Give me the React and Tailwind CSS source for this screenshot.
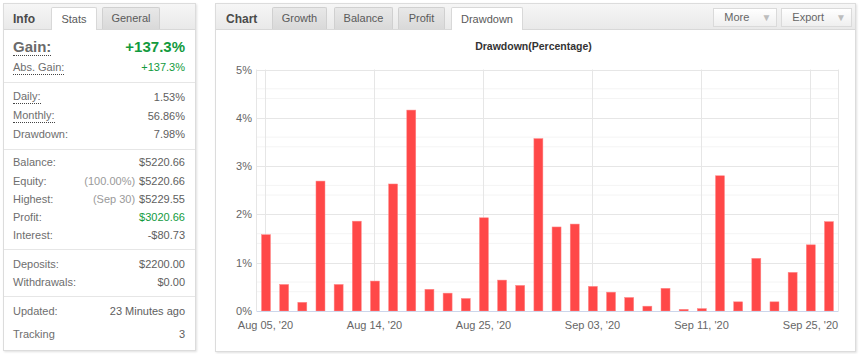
import React from "react";

const font = { fontFamily: '"Liberation Sans", Arial, sans-serif' };

// drawdown values, one bar per trading day
const bars = [
  1.58, 0.55, 0.18, 2.69, 0.55, 1.86, 0.62, 2.63, 4.16, 0.45, 0.37, 0.26,
  1.93, 0.64, 0.53, 3.57, 1.74, 1.8, 0.51, 0.39, 0.28, 0.1, 0.47, 0.035,
  0.05, 2.8, 0.19, 1.09, 0.19, 0.8, 1.37, 1.85,
];

const xLabels = [
  { x: 265.5, t: "Aug 05, '20" },
  { x: 374.5, t: "Aug 14, '20" },
  { x: 483.5, t: "Aug 25, '20" },
  { x: 592.5, t: "Sep 03, '20" },
  { x: 701.5, t: "Sep 11, '20" },
  { x: 810.5, t: "Sep 25, '20" },
];

const Tab = ({ label, active }) => (
  <div
    className={`h-[22px] flex items-center justify-center text-[11px] text-[#5a5a5a] border border-b-0 rounded-t-[2px] ${
      active
        ? "bg-white border-[#d8d8d8] -mb-px h-[23px]"
        : "bg-gradient-to-b from-[#e8e8e8] to-[#d9d9d9] border-[#d0d0d0]"
    }`}
  >
    {label}
  </div>
);

const Row = ({ label, value, note, dotted, green, h = "h-[18px]" }) => (
  <div className={`flex items-center justify-between ${h} text-[11px]`}>
    <span
      className={`text-[#6e6e6e] ${dotted ? "border-b border-dotted border-[#444] leading-[13px]" : ""}`}
    >
      {label}
    </span>
    <span className={green ? "text-[#129a3e]" : "text-[#5e5e5e]"}>
      {note && <span className="text-[#9a9a9a] mr-1">{note}</span>}
      {value}
    </span>
  </div>
);

const StatsPanel = () => (
  <div className="w-[193px] h-[348px] bg-white border border-[#dcdcdc] shadow-[1px_1px_2px_rgba(0,0,0,0.12)] flex flex-col">
    <div className="h-[26px] bg-gradient-to-b from-[#f6f6f6] to-[#e9e9e9] border-b border-[#d8d8d8] flex items-end pl-[9px]">
      <div className="font-bold text-[12px] text-[#4a4a4a] self-center mt-[4px] w-[38px]">Info</div>
      <div className="w-[46px]">
        <Tab label="Stats" active />
      </div>
      <div className="w-[58px] ml-[5px]">
        <Tab label="General" />
      </div>
    </div>

    <div className="px-[9px] pr-[10px] pt-[7px] pb-[5px] border-b border-[#e6e6e6]">
      <div className="flex items-center justify-between h-[21px] font-bold text-[15px]">
        <span className="text-[#6a6a6a] border-b border-dotted border-[#444] leading-[16px]">Gain:</span>
        <span className="text-[#129a3e]">+137.3%</span>
      </div>
      <Row label="Abs. Gain:" value="+137.3%" dotted green h="h-[19px]" />
    </div>

    <div className="px-[9px] pr-[10px] pt-[5px] pb-[5px] border-b border-[#e6e6e6]">
      <Row label="Daily:" value="1.53%" dotted h="h-[18.5px]" />
      <Row label="Monthly:" value="56.86%" dotted h="h-[18.5px]" />
      <Row label="Drawdown:" value="7.98%" h="h-[18.5px]" />
    </div>

    <div className="px-[9px] pr-[10px] pt-[4px] pb-[5px] border-b border-[#e6e6e6]">
      <Row label="Balance:" value="$5220.66" h="h-[18.2px]" />
      <Row label="Equity:" note="(100.00%)" value="$5220.66" h="h-[18.2px]" />
      <Row label="Highest:" note="(Sep 30)" value="$5229.55" h="h-[18.2px]" />
      <Row label="Profit:" value="$3020.66" green h="h-[18.2px]" />
      <Row label="Interest:" value="-$80.73" h="h-[18.2px]" />
    </div>

    <div className="px-[9px] pr-[10px] pt-[5px] pb-[5px] border-b border-[#e6e6e6]">
      <Row label="Deposits:" value="$2200.00" />
      <Row label="Withdrawals:" value="$0.00" />
    </div>

    <div className="px-[9px] pr-[10px] pt-[2.5px]">
      <Row label="Updated:" value="23 Minutes ago" h="h-[23px]" />
      <Row label="Tracking" value="3" h="h-[23px]" />
    </div>
  </div>
);

const DropButton = ({ label }) => (
  <div className="h-[19px] flex items-center gap-[12px] pl-[10px] pr-[5px] border border-[#dadada] bg-gradient-to-b from-white to-[#efefef] text-[11px] text-[#666]">
    <span>{label}</span>
    <span className="text-[10px] text-[#bdbdbd]">▼</span>
  </div>
);

const DrawdownChart = () => {
  const y0 = 311;
  const unit = 48.3;
  const left = 256.5;
  const right = 838.5;
  const yOf = (v) => y0 - v * unit;
  const minor = [];
  for (let k = 0; k < 5; k++) {
    minor.push(k + 0.4, k + 0.6);
  }

  return (
    <svg width="641" height="321" className="block" style={font}>
      <g transform="translate(-216,-30)">
        <text x="533.5" y="50" textAnchor="middle" fontSize="10.5" fontWeight="bold" fill="#333">
          Drawdown(Percentage)
        </text>

        {minor.map((v) => (
          <line key={v} x1={left} x2={right} y1={yOf(v)} y2={yOf(v)} stroke="#f4f4f4" />
        ))}
        {[1, 2, 3, 4, 5].map((v) => (
          <line key={v} x1={left} x2={right} y1={Math.round(yOf(v)) + 0.5} y2={Math.round(yOf(v)) + 0.5} stroke="#e6e6e6" />
        ))}
        <line x1={left} x2={left} y1="69.5" y2={y0} stroke="#e6e6e6" />
        <line x1={right} x2={right} y1="69.5" y2={y0} stroke="#e6e6e6" />
        {xLabels.map((l) => (
          <line key={l.x} x1={l.x} x2={l.x} y1="69.5" y2={y0} stroke="#e6e6e6" />
        ))}

        {bars.map((v, i) => {
          const cx = 266 + i * 18.16;
          const h = v * unit;
          return (
            <rect key={i} x={cx - 4.5} y={y0 - h} width="9" height={h} fill="#ff4848" stroke="#ff8a8a" strokeWidth="0.5" />
          );
        })}

        <line x1={left} x2={right} y1={y0 + 0.5} y2={y0 + 0.5} stroke="#ccd6eb" />

        {[0, 1, 2, 3, 4, 5].map((v) => (
          <text key={v} x="252" y={yOf(v) + 4} textAnchor="end" fontSize="11" fill="#666">
            {v}%
          </text>
        ))}
        {xLabels.map((l) => (
          <text key={l.t} x={l.x} y="329" textAnchor="middle" fontSize="11" fill="#666">
            {l.t}
          </text>
        ))}
      </g>
    </svg>
  );
};

const ChartPanel = () => (
  <div className="w-[641px] h-[349px] bg-white border border-[#dcdcdc] shadow-[1px_1px_2px_rgba(0,0,0,0.12)] flex flex-col">
    <div className="h-[26px] bg-gradient-to-b from-[#f6f6f6] to-[#e9e9e9] border-b border-[#d8d8d8] flex items-end pl-[10px] pr-[3px]">
      <div className="font-bold text-[12px] text-[#4a4a4a] self-center mt-[4px] w-[46px]">Chart</div>
      <div className="w-[55px]">
        <Tab label="Growth" />
      </div>
      <div className="w-[59px] ml-[7px]">
        <Tab label="Balance" />
      </div>
      <div className="w-[47px] ml-[5px]">
        <Tab label="Profit" />
      </div>
      <div className="w-[72px] ml-[6px]">
        <Tab label="Drawdown" active />
      </div>
      <div className="ml-auto self-center mt-[2px] flex gap-[4px]">
        <DropButton label="More" />
        <DropButton label="Export" />
      </div>
    </div>
    <DrawdownChart />
  </div>
);

export default function App() {
  return (
    <div className="w-[861px] h-[354px] bg-white pt-[3px] pl-[3px] flex gap-[19px]" style={font}>
      <StatsPanel />
      <ChartPanel />
    </div>
  );
}
